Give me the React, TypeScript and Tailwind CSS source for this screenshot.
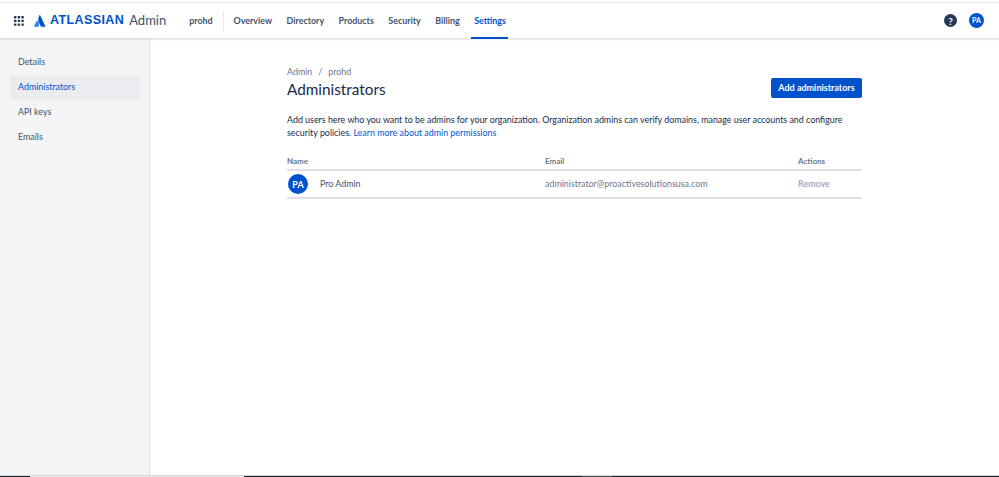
export default function App() {
  const tabs = ["Overview", "Directory", "Products", "Security", "Billing"];
  return (
    <div className="h-[477px] w-[999px] overflow-hidden flex flex-col bg-white text-[#42526e] font-['Lato',sans-serif] text-[8.9px]">
      <div className="h-[2px] shrink-0 bg-white" />
      <div className="h-[1px] shrink-0 bg-[#e9e9ea]" />
      <header className="h-[36px] shrink-0 flex items-center border-b border-[#dfe1e6] shadow-[0_1px_1px_rgba(9,30,66,0.08)] z-10 bg-white">
        <svg className="ml-[14px] w-[10px] h-[10px]" viewBox="0 0 10 10" fill="#253858">
          {[0, 3.7, 7.4].flatMap((x) =>
            [0, 3.7, 7.4].map((y) => <rect key={`${x}-${y}`} x={x} y={y} width="2.4" height="2.4" rx="0.4" />)
          )}
        </svg>
        <svg className="ml-[10px] w-[12px] h-[12px]" viewBox="0 0 12 12">
          <path d="M3.4 5.6c-.15-.2-.4-.18-.52.06L.05 11.3c-.12.24.05.5.3.5h3.9c.13 0 .25-.07.3-.19.84-1.74.34-4.39-1.15-6.01z" fill="#2684ff" />
          <path d="M5.5.3C3.9 2.8 4 5.6 5 7.7l1.9 3.9c.06.12.18.19.3.19h3.9c.26 0 .43-.27.31-.5L6.1.3C6-.02 5.66 0 5.5.3z" fill="#0052cc" />
        </svg>
        <span className="ml-[4px] text-[12.5px] leading-none font-bold tracking-[0.4px] text-[#0052cc] font-['Liberation_Sans',sans-serif]">ATLASSIAN</span>
        <span className="ml-[5px] text-[13px] leading-none text-[#42526e]">Admin</span>
        <span className="ml-[23px] font-bold text-[#42526e]">prohd</span>
        <div className="ml-[10px] h-[20px] w-px bg-[#e6e8ec]" />
        <nav className="ml-[10px] flex h-full gap-[14.5px]">
          {tabs.map((t) => (
            <span key={t} className="h-full flex items-center font-bold text-[#42526e]">{t}</span>
          ))}
          <span className="relative h-full flex items-center font-bold text-[#0052cc]">
            Settings
            <span className="absolute left-[-3px] right-[-2px] bottom-[-1px] h-[2px] bg-[#0052cc]" />
          </span>
        </nav>
        <div className="ml-auto mr-[15px] flex items-center gap-[12px]">
          <div className="w-[13px] h-[13px] rounded-full bg-[#253858] text-white text-[10px] font-bold flex items-center justify-center leading-none">?</div>
          <div className="w-[15px] h-[15px] rounded-full bg-[#0052cc] text-white text-[7px] font-bold flex items-center justify-center leading-none">PA</div>
        </div>
      </header>
      <div className="flex flex-1 min-h-0">
        <aside className="w-[150px] shrink-0 bg-[#f4f5f7] border-r border-[#dfe1e6] pt-[10.5px] pl-[10px] pr-[9px]">
          {["Details", "Administrators", "API keys", "Emails"].map((i) => (
            <div
              key={i}
              className={`h-[25px] flex items-center px-[8px] rounded-[3px] ${i === "Administrators" ? "bg-[#ebecf0] text-[#0052cc]" : "text-[#42526e]"}`}
            >
              {i}
            </div>
          ))}
        </aside>
        <main className="flex-1 pl-[137px] pr-[137px] pt-[26px]">
          <div className="flex justify-between">
            <div>
              <div className="text-[#6b778c] leading-[13px] flex gap-[6px]"><span>Admin</span><span>/</span><span>prohd</span></div>
              <h1 className="text-[15.3px] leading-[22px] font-normal text-[#172b4d]">Administrators</h1>
            </div>
            <button className="mt-[13px] h-[20px] w-[91px] rounded-[2px] bg-[#0052cc] text-white font-bold text-[9px]">Add administrators</button>
          </div>
          <p className="mt-[13px] leading-[13px] text-[#172b4d] w-[575px]">
            Add users here who you want to be admins for your organization. Organization admins can verify domains, manage user accounts and configure security policies. <span className="text-[#0052cc]">Learn more about admin permissions</span>
          </p>
          <div className="mt-[16px] flex h-[12px] items-center text-[8px] font-bold text-[#6b778c]">
            <span className="w-[258px]">Name</span>
            <span className="w-[253px]">Email</span>
            <span>Actions</span>
          </div>
          <div className="mt-[2px] flex h-[30px] items-center border-y-2 border-[#dfe1e6]">
            <div className="w-[258px] flex items-center">
              <div className="ml-[1px] w-[20px] h-[20px] rounded-full bg-[#0052cc] text-white text-[9px] font-bold flex items-center justify-center leading-none">PA</div>
              <span className="ml-[12px] text-[#42526e]">Pro Admin</span>
            </div>
            <span className="w-[253px] text-[#6b778c]">administrator@proactivesolutionsusa.com</span>
            <span className="font-bold text-[#a5adba]">Remove</span>
          </div>
        </main>
      </div>
      <div className="h-[2px] shrink-0 bg-[#12202a] border-t border-[#cfd6d6] flex">
        <div className="ml-[30px] w-[214px] bg-[#e8e8e8]" />
        <div className="ml-[338px] w-[30px] bg-[#4a5356]" />
      </div>
    </div>
  );
}
